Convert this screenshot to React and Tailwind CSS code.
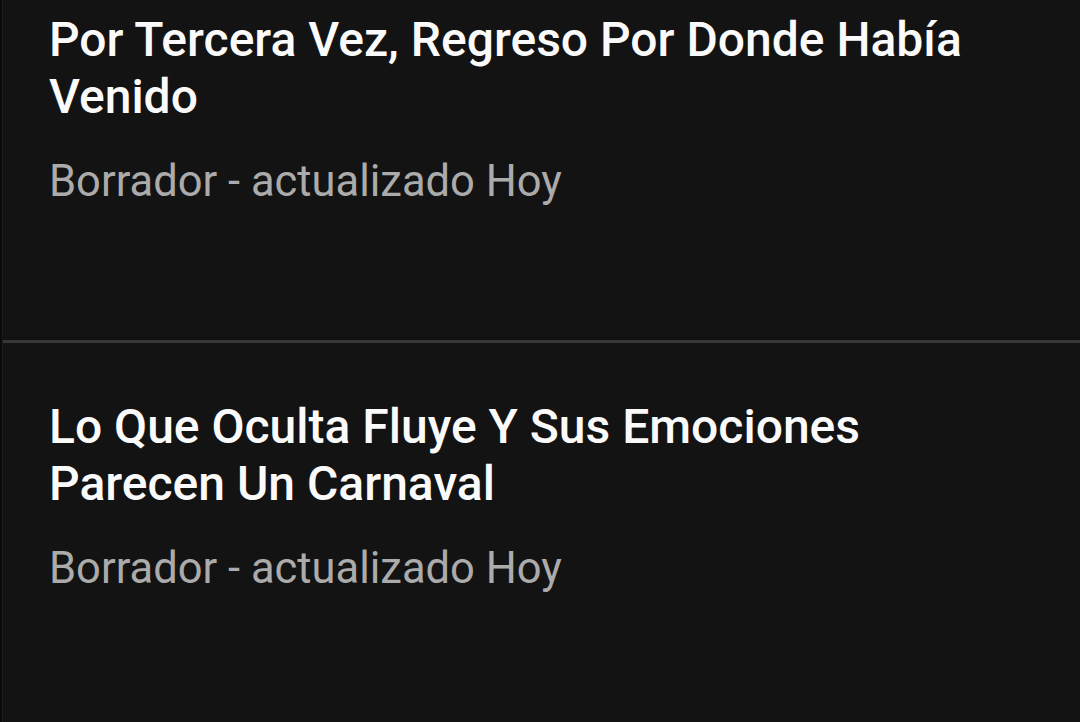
import React from 'react';

const drafts = [
    { title: 'Por Tercera Vez, Regreso Por Donde Había Venido', status: 'Borrador - actualizado Hoy' },
    { title: 'Lo Que Oculta Fluye Y Sus Emociones Parecen Un Carnaval', status: 'Borrador - actualizado Hoy' },
];

const DraftItem = ({ title, status, first }) => (
    <div className={`pl-[46px] pr-[60px] ${first ? 'pt-[11px] pb-[130px]' : 'pt-[55px] pb-[140px]'}`}>
        <h2 className="text-[48px] leading-[57px] font-medium text-[#fafafa]">{title}</h2>
        <p className="mt-[32px] text-[43.5px] leading-[50px] text-[#ababab]">{status}</p>
    </div>
);

const App = () => {
    return (
        <div
            className="h-[722px] w-[1080px] overflow-hidden bg-[#131313] border-l-2 border-[#0b0b0b]"
            style={{ fontFamily: 'Roboto, "Noto Sans", sans-serif' }}
        >
            <div className="h-full border-l border-[#1c1c1c]">
                {drafts.map((d, i) => (
                    <React.Fragment key={i}>
                        {i > 0 && (
                            <div className="border-t border-[#0e0e0e]">
                                <div className="mt-[2px] h-[3px] bg-[#363636]" />
                            </div>
                        )}
                        <DraftItem {...d} first={i === 0} />
                    </React.Fragment>
                ))}
            </div>
        </div>
    );
};

export default App;
